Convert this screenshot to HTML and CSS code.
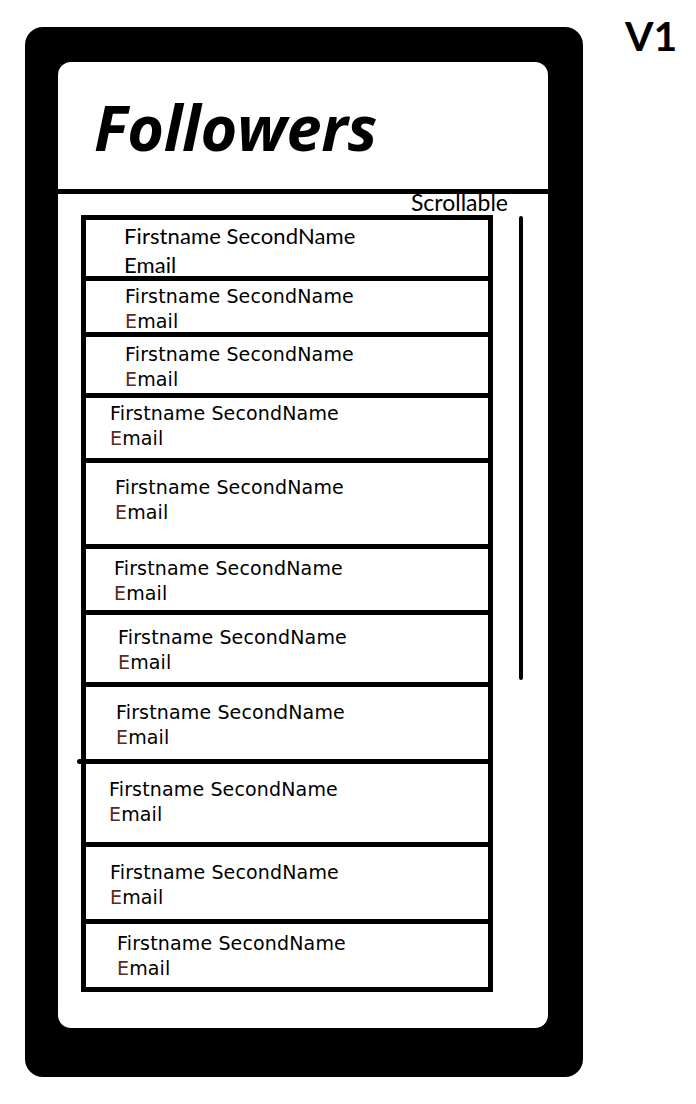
FILE: index.html
```html
<!DOCTYPE html>
<html lang="en">
<head>
<meta charset="utf-8">
<title>Followers – V1</title>
<link rel="stylesheet" href="styles.css">
</head>
<body>
<div class="canvas">
  <div class="phone">
    <div class="screen">
      <header class="header">
        <h1 class="title">Followers</h1>
      </header>
      <div class="content">
        <div class="scroll-label">Scrollable</div>
        <div class="list-area">
          <ul class="list">
            <li class="row row-first"><span class="name">Firstname SecondName</span><span class="email">Email</span></li>
            <li class="row"><span class="name">Firstname SecondName</span><span class="email"><span class="cap">E</span>mail</span></li>
            <li class="row"><span class="name">Firstname SecondName</span><span class="email"><span class="cap">E</span>mail</span></li>
            <li class="row"><span class="name">Firstname SecondName</span><span class="email"><span class="cap">E</span>mail</span></li>
            <li class="row"><span class="name">Firstname SecondName</span><span class="email"><span class="cap">E</span>mail</span></li>
            <li class="row"><span class="name">Firstname SecondName</span><span class="email"><span class="cap">E</span>mail</span></li>
            <li class="row"><span class="name">Firstname SecondName</span><span class="email"><span class="cap">E</span>mail</span></li>
            <li class="row"><span class="name">Firstname SecondName</span><span class="email"><span class="cap">E</span>mail</span></li>
            <li class="row row-stub"><span class="name">Firstname SecondName</span><span class="email"><span class="cap">E</span>mail</span></li>
            <li class="row"><span class="name">Firstname SecondName</span><span class="email"><span class="cap">E</span>mail</span></li>
            <li class="row"><span class="name">Firstname SecondName</span><span class="email"><span class="cap">E</span>mail</span></li>
          </ul>
          <div class="scrollbar"></div>
        </div>
      </div>
    </div>
  </div>
  <div class="version">V1</div>
</div>
</body>
</html>
```

FILE: styles.css
```css
html, body {
  margin: 0;
  padding: 0;
  background: #ffffff;
}

body {
  width: 696px;
  height: 1104px;
  overflow: hidden;
  color: #000;
  font-family: Lato, "Open Sans", "Liberation Sans", sans-serif;
}

.canvas {
  display: flex;
  align-items: flex-start;
  padding: 15px 0 0 25px;
}

.phone {
  margin-top: 12px;
  width: 558px;
  height: 1050px;
  box-sizing: border-box;
  padding: 35px 35px 49px 33px;
  background: #000;
  border-radius: 18px;
}

.screen {
  width: 490px;
  height: 966px;
  background: #fff;
  border-radius: 13px;
  overflow: hidden;
}

.header {
  height: 127px;
  box-sizing: content-box;
  border-bottom: 5px solid #000;
  padding-left: 36px;
}

.title {
  margin: 0;
  padding-top: 33px;
  font-family: "Open Sans", Lato, sans-serif;
  font-weight: 700;
  font-style: italic;
  font-size: 63px;
  line-height: 64px;
  letter-spacing: -0.3px;
}

.content {
  padding-left: 23px;
}

.scroll-label {
  text-align: right;
  padding-right: 40px;
  font-size: 23px;
  line-height: 16px;
  height: 16px;
  margin-bottom: 5px;
}

.list-area {
  display: flex;
  align-items: flex-start;
}

.list {
  list-style: none;
  margin: 0;
  padding: 0;
  width: 412px;
  box-sizing: border-box;
  border: 5px solid #000;
}

.row {
  box-sizing: border-box;
  border-top: 5px solid #000;
  display: flex;
  flex-direction: column;
  font-family: "DejaVu Sans", Verdana, sans-serif;
  font-size: 19px;
  line-height: 25px;
  letter-spacing: 0.15px;
}

.row .name,
.row .email {
  white-space: nowrap;
}

.cap {
  color: #5b2c1e;
}

.row-first {
  border-top: 0;
  font-family: Lato, "Open Sans", sans-serif;
  font-size: 22px;
  line-height: 29px;
  letter-spacing: 0.1px;
}

/* hand-drawn rows: each row has its own height and text inset */
.row:nth-child(1)  { height: 56px; padding: 1px 0 0 38px; }
.row:nth-child(2)  { height: 56px; padding: 3px 0 0 39px; }
.row:nth-child(3)  { height: 61px; padding: 5px 0 0 39px; }
.row:nth-child(4)  { height: 65px; padding: 3px 0 0 24px; }
.row:nth-child(5)  { height: 86px; padding: 12px 0 0 29px; }
.row:nth-child(6)  { height: 66px; padding: 7px 0 0 28px; }
.row:nth-child(7)  { height: 72px; padding: 10px 0 0 32px; }
.row:nth-child(8)  { height: 77px; padding: 13px 0 0 30px; }
.row:nth-child(9)  { height: 83px; padding: 13px 0 0 23px; }
.row:nth-child(10) { height: 77px; padding: 13px 0 0 24px; }
.row:nth-child(11) { height: 68px; padding: 7px 0 0 31px; }

.row-stub {
  position: relative;
}

.row-stub::before {
  content: "";
  position: absolute;
  left: -9px;
  top: -5px;
  width: 6px;
  height: 5px;
  border-radius: 3px;
  background: #000;
}

.scrollbar {
  margin-left: 26px;
  margin-top: 1px;
  width: 4px;
  height: 464px;
  background: #000;
  border-radius: 2px;
}

.version {
  margin-left: 42px;
  font-family: Lato, "Open Sans", sans-serif;
  font-weight: 700;
  font-size: 41px;
  line-height: 42px;
}
```
